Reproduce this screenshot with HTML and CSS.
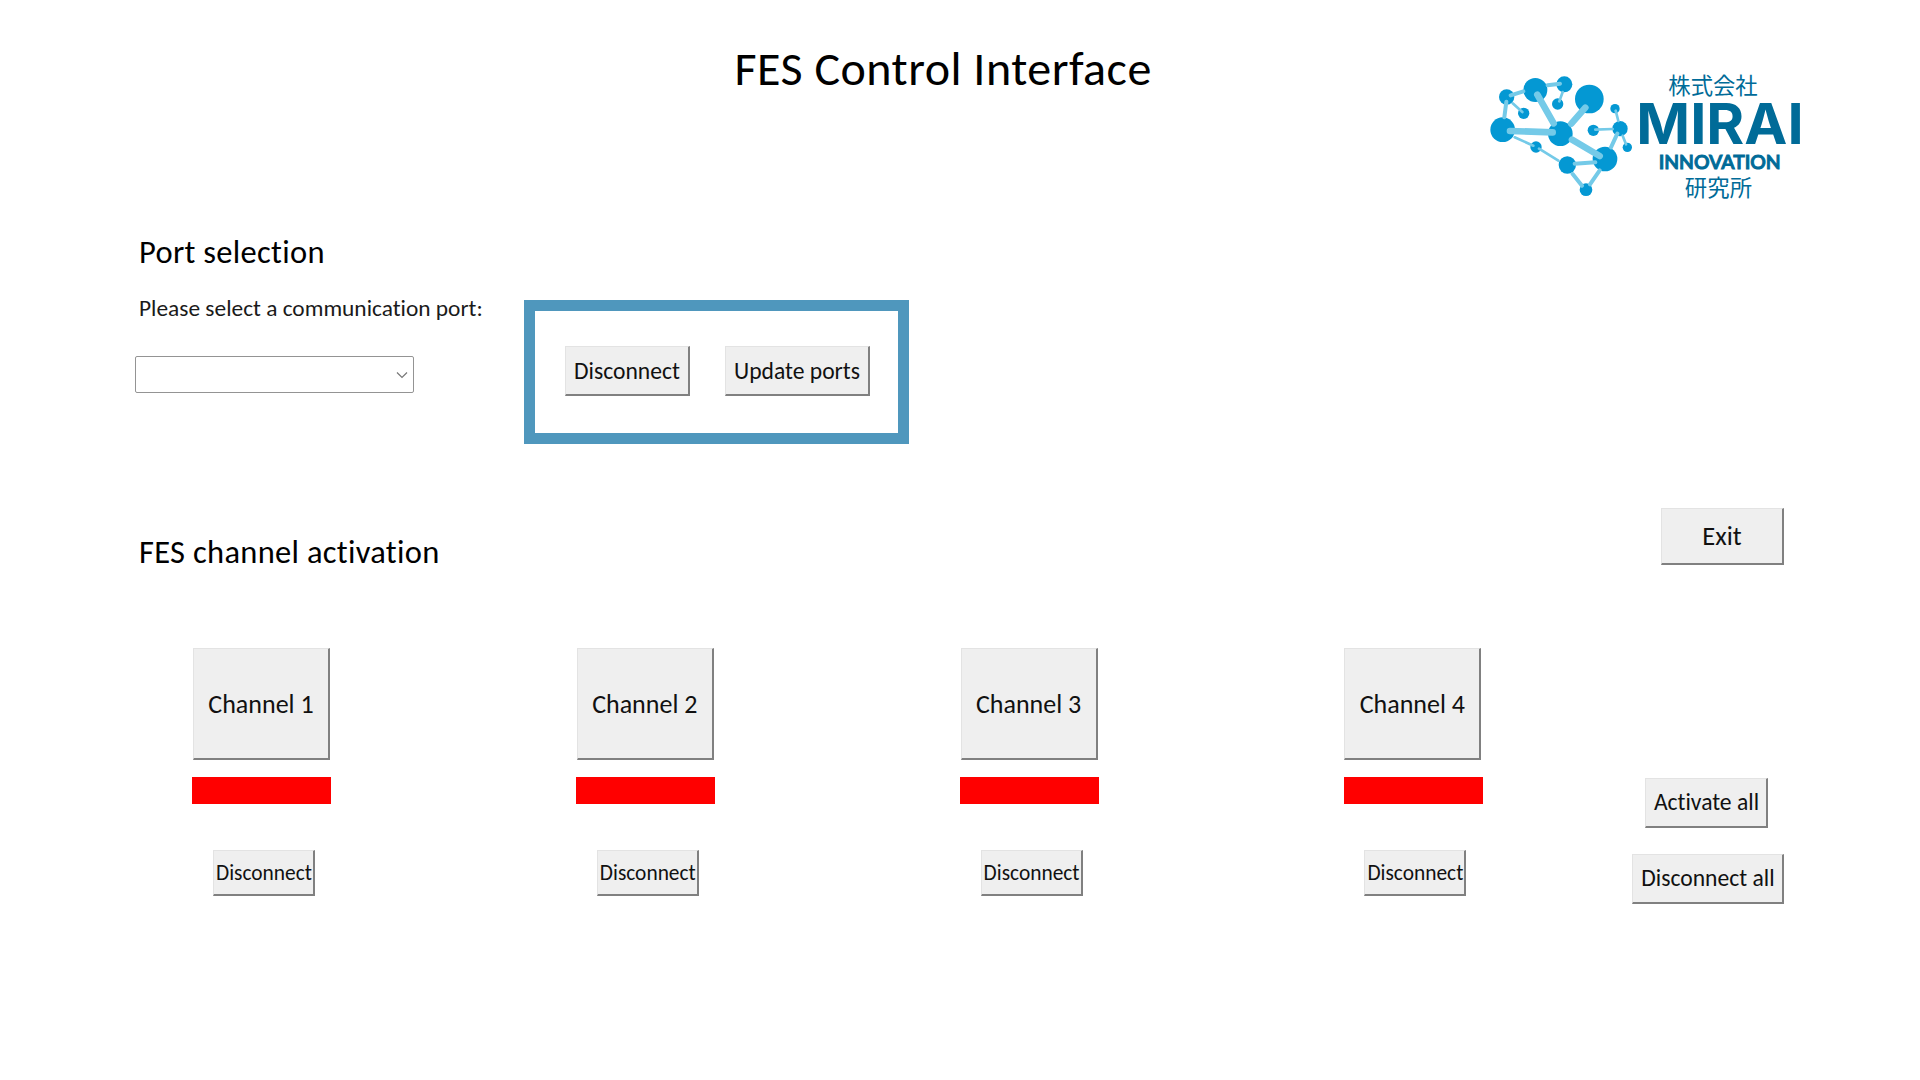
FILE: index.html
```html
<!DOCTYPE html>
<html lang="en">
<head>
<meta charset="utf-8">
<title>FES Control Interface</title>
<link rel="stylesheet" href="styles.css">
</head>
<body>
<main class="page">
  <header class="header">
    <h1 class="title">FES Control Interface</h1>
    <svg class="logo" viewBox="0 0 1020 450" role="img" aria-label="Mirai Innovation">
      <g fill="#0498d3">
        <circle cx="166" cy="90" r="36"/><circle cx="253" cy="73" r="24"/><circle cx="233" cy="132" r="17"/>
        <circle cx="328" cy="117" r="43"/><circle cx="80" cy="111" r="23"/><circle cx="131" cy="160" r="17"/>
        <circle cx="68" cy="209" r="37"/><circle cx="241" cy="221" r="37"/><circle cx="168" cy="261" r="17"/>
        <circle cx="262" cy="315" r="26"/><circle cx="375" cy="297" r="37"/><circle cx="318" cy="389" r="19"/>
        <circle cx="340" cy="211" r="17"/><circle cx="420" cy="206" r="23"/><circle cx="405" cy="146" r="14"/>
        <circle cx="442" cy="262" r="14"/>
      </g>
      <g stroke="#74cae8" stroke-linecap="round" fill="none">
        <path stroke-width="20" d="M90 213L218 217M172 104L221 190M316 143L274 191M276 239L359 288"/>
        <path stroke-width="12" d="M92 106L130 94M203 76L240 71M79 125L73 172M284 311L346 307M278 342L306 377M359 331L330 373M412 221L393 262"/>
        <path stroke-width="8" d="M248 96L238 124M98 130L127 156M104 232L160 257M177 266L235 302M346 209L398 207M407 152L415 183M428 227L438 253"/>
      </g>
      <g fill="#006b98" text-anchor="middle">
        <text class="logo-cjk" x="699" y="102" textLength="268">株式会社</text>
        <text class="logo-name" x="720" y="253" textLength="502" lengthAdjust="spacingAndGlyphs">MIRAI</text>
        <text class="logo-sub" x="719" y="327" textLength="366" lengthAdjust="spacingAndGlyphs">INNOVATION</text>
        <text class="logo-cjk" x="715" y="407" textLength="202">研究所</text>
      </g>
    </svg>
  </header>

  <section class="ports">
    <div class="port-form">
      <h2 class="heading">Port selection</h2>
      <label class="label" for="port">Please select a communication port:</label>
      <div class="combo" id="port" role="combobox">
        <svg class="chevron" viewBox="0 0 12 8"><path d="M1 1.5L6 6.5L11 1.5"/></svg>
      </div>
    </div>
    <div class="frame">
      <button class="btn btn-connect">Disconnect</button>
      <button class="btn btn-update">Update ports</button>
    </div>
  </section>

  <section class="activation">
    <h2 class="heading heading-activation">FES channel activation</h2>
    <button class="btn btn-exit">Exit</button>
  </section>

  <section class="channels">
    <div class="channel"><button class="btn btn-channel">Channel 1</button><div class="status"></div><button class="btn btn-small">Disconnect</button></div>
    <div class="channel"><button class="btn btn-channel">Channel 2</button><div class="status"></div><button class="btn btn-small">Disconnect</button></div>
    <div class="channel"><button class="btn btn-channel">Channel 3</button><div class="status"></div><button class="btn btn-small">Disconnect</button></div>
    <div class="channel"><button class="btn btn-channel">Channel 4</button><div class="status"></div><button class="btn btn-small">Disconnect</button></div>
    <div class="all">
      <button class="btn btn-activate">Activate all</button>
      <button class="btn btn-all">Disconnect all</button>
    </div>
  </section>
</main>
</body>
</html>
```
FILE: styles.css
```css
* { box-sizing: border-box; }
body { margin: 0; background: #fff; color: #000; font-family: Calibri, Carlito, Lato, sans-serif; font-variant-ligatures: none; }
h1, h2 { margin: 0; font-weight: 400; white-space: nowrap; }

.page { width: 1920px; height: 1080px; overflow: hidden; }

.header { display: grid; grid-template-columns: 1480px 340px; height: 231px; }
.title { padding: 39px 0 0 734.5px; font-size: 48px; line-height: 60px; letter-spacing: 0.5px; }
.logo { width: 340px; height: 150px; margin-top: 60px; }
.logo-cjk { font: 400 67px "Noto Sans CJK JP", sans-serif; }
.logo-name { font: 700 169px Inter, sans-serif; }
.logo-sub { font: 600 58px Lato, sans-serif; stroke: #006b98; stroke-width: 3px; }

.heading { font-size: 32.5px; line-height: 40px; letter-spacing: 0.3px; }

.ports { display: flex; height: 277px; padding-left: 135px; }
.port-form { width: 389px; padding-top: 1px; }
.port-form .heading { padding-left: 4px; }
.label { display: block; margin-top: 21px; padding-left: 4px; color: #1a1a1a; font-size: 23.4px; line-height: 30px; white-space: nowrap; }
.combo { display: flex; align-items: center; justify-content: flex-end; width: 279px; height: 37px; margin-top: 33px; padding-right: 5px; border: 1px solid #949494; border-radius: 2px; }
.chevron { width: 12px; height: 8px; fill: none; stroke: #777; stroke-width: 1.2; }

.frame { display: flex; gap: 35px; width: 385px; height: 144px; margin-top: 69px; padding: 35px 0 0 30px; border: 11px solid #4f97bd; }

.btn { flex: none; padding: 0; border: solid; border-width: 1px 2px 2px 1px; border-color: #e3e3e3 #808080 #808080 #e3e3e3; background: #efefef; color: #111; font-family: inherit; font-size: 23.6px; font-variant-ligatures: none; white-space: nowrap; }
.btn-connect { width: 125px; height: 50px; }
.btn-update { width: 145px; height: 50px; }
.btn-exit { width: 123px; height: 57px; font-size: 26.5px; }

.activation { display: flex; justify-content: space-between; height: 140px; padding: 0 136px 0 139px; }
.heading-activation { padding-top: 24px; }

.channels { display: grid; grid-template-columns: repeat(3, 383.8px) 288.8px 152px; padding-left: 192.3px; }
.channel { display: flex; flex-direction: column; align-items: flex-start; }
.btn-channel { width: 137px; height: 112px; margin-left: 0.7px; font-size: 26px; }
.status { width: 139px; height: 27px; margin: 17px 0 46px; background: #f00; }
.btn-small { width: 102px; height: 46px; margin-left: 20.7px; padding-left: 1px; font-size: 21.4px; }
.all { display: flex; flex-direction: column; align-items: flex-start; padding-top: 130px; }
.btn-activate { width: 123px; height: 50px; margin-left: 13px; padding-bottom: 1px; }
.btn-all { width: 152px; height: 50px; margin-top: 26px; padding-bottom: 1px; }
```
